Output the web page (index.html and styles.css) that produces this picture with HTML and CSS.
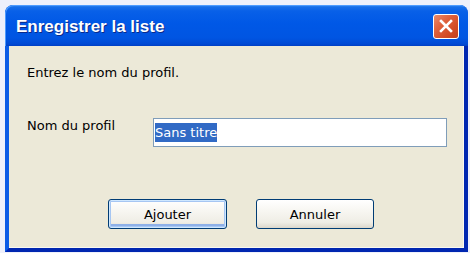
FILE: index.html
```html
<!DOCTYPE html>
<html lang="fr">
<head>
<meta charset="utf-8">
<title>Enregistrer la liste</title>
<link rel="stylesheet" href="styles.css">
</head>
<body>
<div class="window">
  <div class="titlebar">
    <span class="title">Enregistrer la liste</span>
    <span class="close">
      <svg width="14" height="14" viewBox="0 0 14 14"><path d="M2 2 L12 12 M12 2 L2 12" stroke="#fff" stroke-width="2.6" stroke-linecap="square" fill="none"/></svg>
    </span>
  </div>
  <div class="frame">
    <div class="client">
      <p class="prompt">Entrez le nom du profil.</p>
      <div class="field-row">
        <span class="label">Nom du profil</span>
        <div class="textbox"><span class="sel">Sans titre</span></div>
      </div>
      <div class="buttons">
        <button class="btn btn-default">Ajouter</button>
        <button class="btn btn-cancel">Annuler</button>
      </div>
    </div>
  </div>
</div>
</body>
</html>
```

FILE: styles.css
```css
html, body {
  margin: 0;
  padding: 0;
}
body {
  background: #eef0fb;
  width: 470px;
  height: 253px;
  overflow: hidden;
  padding: 5px 0 0 5px;
  box-sizing: border-box;
  font-family: "DejaVu Sans", sans-serif;
  font-size: 13px;
  color: #000;
}
.window {
  width: 463px;
  height: 247px;
  display: flex;
  flex-direction: column;
  border-radius: 8px 8px 0 0;
  overflow: hidden;
  background: #0a4fd8;
}
.titlebar {
  height: 41px;
  flex: none;
  display: flex;
  align-items: center;
  justify-content: space-between;
  padding: 0 9px 0 11px;
  box-sizing: border-box;
  background: linear-gradient(#3d8ff7 0, #166de9 5%, #0860e8 15%, #0058e6 45%, #0055e2 80%, #0049d4 95%, #003fc4 100%);
  border-radius: 8px 8px 0 0;
  box-shadow: inset 1px 1px 0 #4d9bff;
}
.title {
  font-family: "Liberation Sans", Arial, sans-serif;
  font-weight: bold;
  font-size: 17px;
  color: #fff;
  text-shadow: 1px 1px 0 #0a2a8a;
  margin-top: 3px;
}
.close {
  width: 26px;
  height: 25px;
  box-sizing: border-box;
  border: 1px solid #fff;
  border-radius: 3px;
  background: linear-gradient(135deg, #e88a6c 0%, #e0633f 35%, #d24c26 70%, #c2401d 100%);
  display: flex;
  align-items: center;
  justify-content: center;
  margin-top: 1px;
}
.frame {
  flex: 1;
  display: flex;
  border-left: 4px solid #0b5be6;
  border-right: 4px solid #0026b0;
  border-bottom: 4px solid #0026b0;
}
.client {
  flex: 1;
  background: #ece9d8;
  padding: 19px 0 0 18px;
  box-shadow: inset -1px -1px 0 #f8f7f0;
}
.prompt {
  margin: 0;
  line-height: 15px;
}
.field-row {
  margin-top: 38px;
  display: flex;
  align-items: flex-start;
}
.label {
  width: 126px;
  line-height: 15px;
  flex: none;
}
.textbox {
  width: 294px;
  height: 29px;
  box-sizing: border-box;
  border: 1px solid #7f9db9;
  background: #fff;
  display: flex;
  align-items: center;
  padding-left: 1px;
}
.sel {
  background: #316ac5;
  color: #fff;
  line-height: 19px;
  margin-top: -1px;
}
.buttons {
  margin-top: 52px;
  padding-left: 81px;
  display: flex;
  gap: 29px;
}
.btn {
  height: 30px;
  box-sizing: border-box;
  border: 1px solid #003c74;
  border-radius: 3px;
  background: linear-gradient(#ffffff 0%, #f7f6f1 40%, #efede5 80%, #dcd7cb 100%);
  font-family: "DejaVu Sans", sans-serif;
  font-size: 13px;
  color: #000;
  padding: 0;
}
.btn-default {
  width: 119px;
  box-shadow: inset 0 0 0 1px #cee7ff, inset 0 0 0 2px #a6c6f2, inset 0 -2px 0 2px #8eb0e8;
}
.btn-cancel {
  width: 118px;
}
```
